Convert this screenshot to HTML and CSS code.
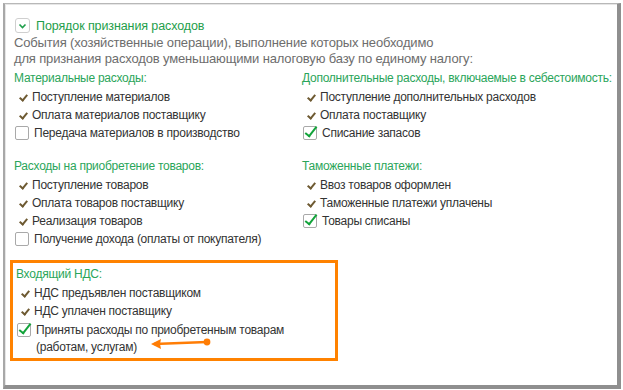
FILE: index.html
```html
<!DOCTYPE html>
<html lang="ru">
<head>
    <meta charset="UTF-8">
    <title>Порядок признания расходов</title>
    <link rel="stylesheet" href="styles.css">
</head>
<body>
    <div class="frame">
        <div class="group-title">
            <span class="collapse-btn">
                <svg width="9" height="6" viewBox="0 0 9 6"><polyline points="1.5,1.5 4.5,4.5 7.5,1.5" fill="none" stroke="#1e9e4a" stroke-width="1.6"/></svg>
            </span>
            <span>Порядок признания расходов</span>
        </div>

        <p class="desc">События (хозяйственные операции), выполнение которых необходимо<br>для признания расходов уменьшающими налоговую базу по единому налогу:</p>

        <div class="columns">
            <div class="col">
                <div class="section">
                    <div class="heading">Материальные расходы:</div>
                    <div class="item"><span class="tick"></span>Поступление материалов</div>
                    <div class="item"><span class="tick"></span>Оплата материалов поставщику</div>
                    <div class="item"><span class="box"></span>Передача материалов в производство</div>
                </div>
                <div class="section">
                    <div class="heading">Расходы на приобретение товаров:</div>
                    <div class="item"><span class="tick"></span>Поступление товаров</div>
                    <div class="item"><span class="tick"></span>Оплата товаров поставщику</div>
                    <div class="item"><span class="tick"></span>Реализация товаров</div>
                    <div class="item"><span class="box"></span>Получение дохода (оплаты от покупателя)</div>
                </div>
            </div>
            <div class="col">
                <div class="section">
                    <div class="heading">Дополнительные расходы, включаемые в себестоимость:</div>
                    <div class="item"><span class="tick"></span>Поступление дополнительных расходов</div>
                    <div class="item"><span class="tick"></span>Оплата поставщику</div>
                    <div class="item"><span class="box checked"></span>Списание запасов</div>
                </div>
                <div class="section">
                    <div class="heading">Таможенные платежи:</div>
                    <div class="item"><span class="tick"></span>Ввоз товаров оформлен</div>
                    <div class="item"><span class="tick"></span>Таможенные платежи уплачены</div>
                    <div class="item"><span class="box checked"></span>Товары списаны</div>
                </div>
            </div>
        </div>

        <div class="vat">
            <div class="heading">Входящий НДС:</div>
            <div class="item"><span class="tick"></span>НДС предъявлен поставщиком</div>
            <div class="item"><span class="tick"></span>НДС уплачен поставщику</div>
            <div class="item multi"><span class="box checked"></span>Приняты расходы по приобретенным товарам<br>(работам, услугам)</div>
            <svg class="arrow" width="64" height="14" viewBox="0 0 64 14">
                <line x1="4" y1="8" x2="57" y2="6" stroke="#ff7d05" stroke-width="2.4"/>
                <polygon points="1,8 11,3 10,8 11,13" fill="#ff7d05"/>
                <circle cx="57" cy="6" r="3.4" fill="#ff7d05"/>
            </svg>
        </div>
    </div>
</body>
</html>
```

FILE: styles.css
```css
body { margin: 0; background: #fff; font-family: "Liberation Sans", Arial, sans-serif; font-size: 12px; letter-spacing: -0.25px; color: #333; }
.frame { margin: 3px 0 0 3px; width: 618px; height: 386px; box-sizing: border-box; padding: 13px 0 0 9px;
    border-top: 1px solid #b8b8b8; border-left: 2px solid #a8a8a8; border-right: 4px solid #8f8f8f; border-bottom: 4px solid #8f8f8f;
    box-shadow: inset 1px 1px 0 #e6e6e6; position: relative; }

.group-title { display: flex; align-items: center; gap: 6px; height: 17px; color: #1e9e4a; margin-left: 1px; font-size: 12.5px; letter-spacing: -0.1px; }
.collapse-btn { width: 13px; height: 13px; border: 1px solid #cfcfcf; border-radius: 3px; display: flex; align-items: center; justify-content: center; }

.desc { margin: 1px 0 0; line-height: 16px; color: #6d6d6d; font-size: 13px; letter-spacing: -0.15px; }

.columns { display: grid; grid-template-columns: 288px 1fr; margin-top: 3px; }
.section { margin-bottom: 16px; }
.section:last-child { margin-bottom: 0; }
.heading { color: #2aa55a; line-height: 16px; height: 16px; margin-bottom: 2px; white-space: nowrap; }

.item { display: flex; align-items: center; height: 18px; color: #333; white-space: nowrap; }
.item.multi { align-items: flex-start; height: auto; line-height: 17px; padding-top: 2px; }
.tick { width: 18px; height: 18px; position: relative; flex: none; }
.tick::after { content: ""; position: absolute; left: 7px; top: 5px; width: 3px; height: 6px; border-right: 2px solid #6e5a32; border-bottom: 2px solid #6e5a32; transform: rotate(40deg); }
.box { width: 12px; height: 12px; border: 1px solid #a9a9a9; border-radius: 2px; margin: 0 5px 0 1px; position: relative; flex: none; background: #fff; }
.item.multi .box { margin-top: 1px; }
.box.checked::after { content: ""; position: absolute; left: 4px; top: -3px; width: 4px; height: 11px; border-right: 2.4px solid #12a33a; border-bottom: 2.4px solid #12a33a; transform: rotate(38deg); }

.vat { position: relative; margin: 12px 0 0 -4px; width: 319px; border: 3px solid #ff8200; padding: 3px 0 2px 3px; }
.arrow { position: absolute; left: 137px; top: 73px; }
```
